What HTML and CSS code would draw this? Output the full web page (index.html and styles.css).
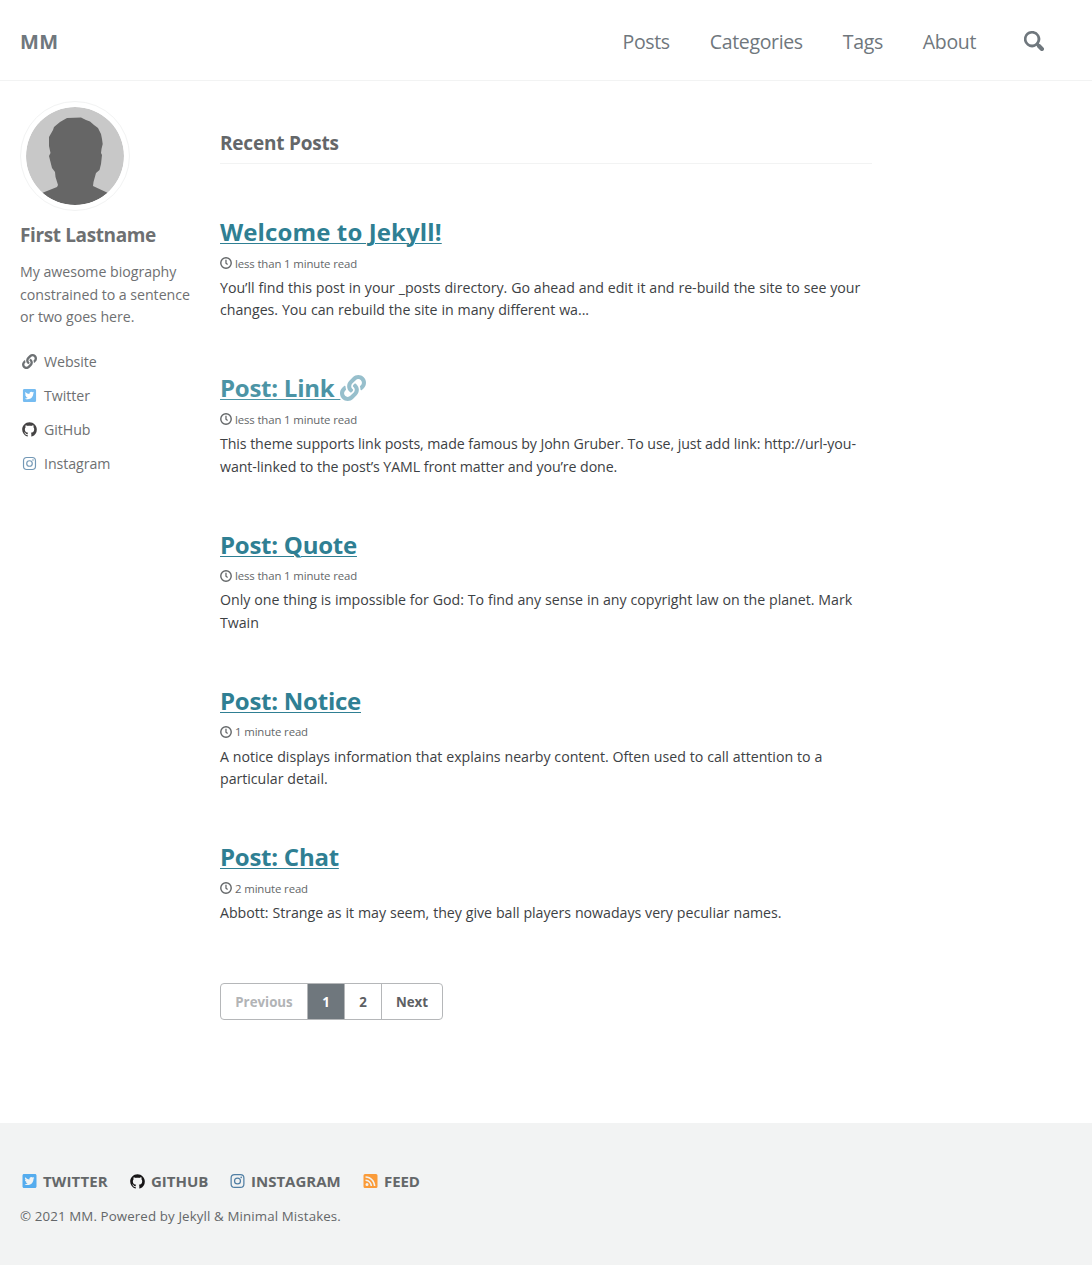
FILE: index.html
```html
<!DOCTYPE html>
<html lang="en">
<head>
<meta charset="utf-8">
<title>MM</title>
<link rel="stylesheet" href="styles.css">
</head>
<body>
<svg class="sprite" aria-hidden="true">
  <symbol id="link" viewBox="0 0 512 512"><path d="M326.612 185.391c59.747 59.809 58.927 155.698.36 214.59-.11.12-.24.25-.36.37l-67.2 67.2c-59.27 59.27-155.699 59.262-214.96 0-59.27-59.26-59.27-155.7 0-214.96l37.106-37.106c9.84-9.84 26.786-3.3 27.294 10.606.648 17.722 3.826 35.527 9.69 52.721 1.986 5.822.567 12.262-3.783 16.612l-13.087 13.087c-28.026 28.026-28.905 73.66-1.155 101.96 28.024 28.579 74.086 28.749 102.325.51l67.2-67.19c28.191-28.191 28.073-73.757 0-101.83-3.701-3.694-7.429-6.564-10.341-8.569a16.037 16.037 0 0 1-6.947-12.606c-.396-10.567 3.348-21.456 11.698-29.806l21.054-21.055c5.521-5.521 14.182-6.199 20.584-1.731a152.482 152.482 0 0 1 20.522 17.197zM467.547 44.449c-59.261-59.262-155.69-59.27-214.96 0l-67.2 67.2c-.12.12-.25.25-.36.37-58.566 58.892-59.387 154.781.36 214.59a152.454 152.454 0 0 0 20.521 17.196c6.402 4.468 15.064 3.789 20.584-1.731l21.054-21.055c8.35-8.35 12.094-19.239 11.698-29.806a16.037 16.037 0 0 0-6.947-12.606c-2.912-2.005-6.64-4.875-10.341-8.569-28.073-28.073-28.191-73.639 0-101.83l67.2-67.19c28.239-28.239 74.3-28.069 102.325.51 27.75 28.3 26.872 73.934-1.155 101.96l-13.087 13.087c-4.35 4.35-5.769 10.79-3.783 16.612 5.864 17.194 9.042 34.999 9.69 52.721.509 13.906 17.454 20.446 27.294 10.606l37.106-37.106c59.271-59.259 59.271-155.699.001-214.959z"/></symbol>
  <symbol id="twitter" viewBox="0 0 448 512"><path d="M400 32H48C21.5 32 0 53.5 0 80v352c0 26.5 21.5 48 48 48h352c26.5 0 48-21.5 48-48V80c0-26.5-21.5-48-48-48zm-48.9 158.8c.2 2.8.2 5.7.2 8.5 0 86.7-66 186.6-186.6 186.6-37.2 0-71.7-10.8-100.7-29.4 5.3.6 10.4.8 15.8.8 30.7 0 58.9-10.4 81.4-28-28.8-.6-53-19.5-61.3-45.5 10.1 1.5 19.2 1.5 29.6-1.2-30-6.1-52.5-32.5-52.5-64.4v-.8c8.7 4.9 18.9 7.9 29.6 8.3a65.447 65.447 0 0 1-29.2-54.6c0-12.2 3.2-23.4 8.9-33.1 32.3 39.8 80.8 65.8 135.2 68.6-9.3-44.5 24-80.6 64-80.6 18.9 0 35.9 7.9 47.9 20.7 14.8-2.8 29-8.3 41.6-15.8-4.9 15.2-15.2 28-28.8 36.1 13.2-1.4 26-5.1 37.8-10.2-8.9 13.1-20.1 24.7-32.9 34z"/></symbol>
  <symbol id="github" viewBox="-.2 -.3 16.4 16.4"><path d="M8 0C3.58 0 0 3.58 0 8c0 3.54 2.29 6.53 5.47 7.59.4.07.55-.17.55-.38 0-.19-.01-.82-.01-1.49-2.01.37-2.53-.49-2.69-.94-.09-.23-.48-.94-.82-1.13-.28-.15-.68-.52-.01-.53.63-.01 1.08.58 1.23.82.72 1.21 1.87.87 2.33.66.07-.52.28-.87.51-1.07-1.78-.2-3.64-.89-3.64-3.95 0-.87.31-1.59.82-2.15-.08-.2-.36-1.02.08-2.12 0 0 .67-.21 2.2.82.64-.18 1.32-.27 2-.27s1.36.09 2 .27c1.53-1.04 2.2-.82 2.2-.82.44 1.1.16 1.92.08 2.12.51.56.82 1.27.82 2.15 0 3.07-1.87 3.75-3.65 3.95.29.25.54.73.54 1.48 0 1.07-.01 1.93-.01 2.2 0 .21.15.46.55.38A8.01 8.01 0 0 0 16 8c0-4.42-3.58-8-8-8z"/></symbol>
  <symbol id="instagram" viewBox="0 0 448 512"><rect x="20" y="52" width="408" height="408" rx="110" fill="none" stroke="currentColor" stroke-width="40"/><circle cx="224" cy="256" r="95" fill="none" stroke="currentColor" stroke-width="40"/><circle cx="343" cy="137" r="27"/></symbol>
  <symbol id="rss" viewBox="0 0 448 512"><path fill-rule="evenodd" d="M48 32h352a48 48 0 0 1 48 48v352a48 48 0 0 1-48 48H48a48 48 0 0 1-48-48V80a48 48 0 0 1 48-48zm64 288a48 48 0 1 0 0 96 48 48 0 0 0 0-96zM64 213v34a9 9 0 0 0 8 9c85 5 147 70 152 152a9 9 0 0 0 9 8h34a8 8 0 0 0 8-9C270 301 179 210 73 205a8 8 0 0 0-9 8zm0-104v34a9 9 0 0 0 8 9c141 5 251 119 256 256a9 9 0 0 0 9 8h34a8 8 0 0 0 9-9C374 244 241 106 73 101a8 8 0 0 0-9 8z"/></symbol>
  <symbol id="clock" viewBox="0 0 512 512"><circle cx="256" cy="256" r="223" fill="none" stroke="currentColor" stroke-width="60"/><path d="M255 112v152l70 52" fill="none" stroke="currentColor" stroke-width="54"/></symbol>
</svg>

<header class="masthead">
  <a class="site-title" href="#">MM</a>
  <nav class="site-nav">
    <a href="#">Posts</a>
    <a href="#">Categories</a>
    <a href="#">Tags</a>
    <a href="#">About</a>
  </nav>
  <button class="search" aria-label="Toggle search"><svg viewBox="0 0 15.99 16"><path d="M15.5,13.12L13.19,10.8a1.69,1.69,0,0,0-1.28-.55l-.06-.06A6.5,6.5,0,0,0,5.77,0,6.5,6.5,0,0,0,2.46,11.59a6.47,6.47,0,0,0,7.74.26l.05.05a1.65,1.65,0,0,0,.5,1.24l2.38,2.38A1.68,1.68,0,0,0,15.5,13.12ZM6.4,2A4.41,4.41,0,1,1,2,6.4,4.43,4.43,0,0,1,6.4,2Z"/></svg></button>
</header>

<div class="page">
  <aside class="sidebar">
    <svg class="avatar" viewBox="0 0 98 98">
      <defs><clipPath id="round"><circle cx="49" cy="49" r="49"/></clipPath></defs>
      <g clip-path="url(#round)">
        <rect width="98" height="98" fill="#c8c8c8"/>
        <path fill="#666" d="M41 11L55 10.500L60 13L64 14.500L68 18L72 21L75 27L76 32L76.700 37L75.500 42L75 46L76 48L75 57L73.500 63L70 66L67.500 75L67 79L82 86L98 98H0L16 86L31 80L32 78L29.500 70L29 65L26 61L23 49L24.500 46L23 39L23 30L27 23L28 20L34 15Z"/>
      </g>
    </svg>
    <h3 class="author-name">First Lastname</h3>
    <p class="author-bio">My awesome biography constrained to a sentence or two goes here.</p>
    <ul class="author-links">
      <li><svg class="icon"><use href="#link"/></svg><a href="#">Website</a></li>
      <li><svg class="icon twitter"><use href="#twitter"/></svg><a href="#">Twitter</a></li>
      <li><svg class="icon github"><use href="#github"/></svg><a href="#">GitHub</a></li>
      <li><svg class="icon instagram"><use href="#instagram"/></svg><a href="#">Instagram</a></li>
    </ul>
  </aside>

  <main class="archive">
    <h3 class="subtitle">Recent Posts</h3>
    <article class="post">
      <h2 class="lead"><a href="#">Welcome to Jekyll!</a></h2>
      <p class="meta"><svg><use href="#clock"/></svg>less than 1 minute read</p>
      <p class="excerpt">You’ll find this post in your _posts directory. Go ahead and edit it and re-build the site to see your changes. You can rebuild the site in many different wa...</p>
    </article>
    <article class="post">
      <h2 class="external"><a href="#">Post: Link&nbsp;</a><svg><use href="#link"/></svg></h2>
      <p class="meta"><svg><use href="#clock"/></svg>less than 1 minute read</p>
      <p class="excerpt tight">This theme supports link posts, made famous by John Gruber. To use, just add link: http://url-you-<wbr>want-linked to the post’s YAML front matter and you’re done.</p>
    </article>
    <article class="post">
      <h2><a href="#">Post: Quote</a></h2>
      <p class="meta"><svg><use href="#clock"/></svg>less than 1 minute read</p>
      <p class="excerpt">Only one thing is impossible for God: To find any sense in any copyright law on the planet. Mark Twain</p>
    </article>
    <article class="post">
      <h2><a href="#">Post: Notice</a></h2>
      <p class="meta"><svg><use href="#clock"/></svg>1 minute read</p>
      <p class="excerpt">A notice displays information that explains nearby content. Often used to call attention to a particular detail.</p>
    </article>
    <article class="post">
      <h2><a href="#">Post: Chat</a></h2>
      <p class="meta"><svg><use href="#clock"/></svg>2 minute read</p>
      <p class="excerpt">Abbott: Strange as it may seem, they give ball players nowadays very peculiar names.</p>
    </article>
    <nav class="pagination">
      <a class="disabled" href="#">Previous</a>
      <a class="current" href="#">1</a>
      <a class="number" href="#">2</a>
      <a class="next" href="#">Next</a>
    </nav>
  </main>
</div>

<footer class="footer">
  <ul class="footer-links">
    <li class="f-twitter"><svg class="icon twitter"><use href="#twitter"/></svg><a href="#">Twitter</a></li>
    <li class="f-github"><svg class="icon github"><use href="#github"/></svg><a href="#">GitHub</a></li>
    <li class="f-instagram"><svg class="icon instagram"><use href="#instagram"/></svg><a href="#">Instagram</a></li>
    <li class="f-feed"><svg class="icon rss"><use href="#rss"/></svg><a href="#">Feed</a></li>
  </ul>
  <p class="copyright">© 2021 MM. Powered by Jekyll &amp; Minimal Mistakes.</p>
</footer>
</body>
</html>
```

FILE: styles.css
```css
* { box-sizing: border-box; }
body {
  margin: 0;
  min-height: 1265px;
  display: flex;
  flex-direction: column;
  background: #fff;
  color: #3d4144;
  font-family: "Segoe UI", "Open Sans", "Noto Sans", sans-serif;
}
h2, h3, p, ul { margin: 0; padding: 0; }
ul { list-style: none; }
a { color: inherit; text-decoration: none; }
svg { fill: currentColor; flex: none; }
.sprite { display: none; }

.masthead {
  height: 81px;
  padding: 2px 48px 0 20px;
  display: flex;
  align-items: center;
  border-bottom: 1px solid #f2f3f3;
  color: #6f777d;
}
.site-title { font-size: 20px; font-weight: 700; letter-spacing: 0.5px; margin-right: auto; }
.site-nav { display: flex; gap: 40px; font-size: 19.5px; letter-spacing: -0.35px; }
.search {
  margin: 0 0 1px 48px;
  padding: 0;
  border: 0;
  background: none;
  color: inherit;
  line-height: 0;
}
.search svg { width: 20px; height: 20px; }

.page { display: flex; padding: 20px 20px 0; }
.sidebar { width: 200px; padding-right: 25px; color: #6e7072; }
.avatar {
  display: block;
  width: 110px;
  height: 110px;
  padding: 5px;
  border: 1px solid #f2f3f3;
  border-radius: 50%;
}
.author-name { margin-top: 10px; font-size: 19px; line-height: 28px; letter-spacing: -0.38px; }
.author-bio { margin-top: 12px; font-size: 14.2px; line-height: 22.5px; letter-spacing: -0.04px; }
.author-links { margin-top: 16px; font-size: 14.2px; letter-spacing: -0.05px; }
.author-links li { display: flex; align-items: center; height: 34px; }
.icon { width: 15px; height: 15px; margin: 0 7px 0 2px; }
.author-links .icon { opacity: 0.8; }
.author-links .icon:not(.twitter):not(.github):not(.instagram) { color: #494e52; }
.twitter { color: #55acee; }
.github { color: #171516; }
.instagram { color: #517fa4; }
.rss { color: #fa9b39; }
.footer-links .icon.twitter, .footer-links .icon.instagram, .footer-links .icon.rss { height: 16px; }

.archive { width: 652px; padding-top: 28px; }
.subtitle {
  height: 35px;
  margin-bottom: 52px;
  border-bottom: 1px solid #f2f3f3;
  color: #646769;
  font-size: 19px;
  line-height: 28px;
  letter-spacing: -0.2px;
}
.post { margin-bottom: 50.5px; }
.post h2 {
  display: flex;
  align-items: center;
  height: 32px;
  font-size: 24px;
  line-height: 32px;
  letter-spacing: -0.25px;
  color: #2f7f93;
}
.post h2.lead { letter-spacing: 0.12px; }
.post h2 a { text-decoration: underline; text-decoration-thickness: 1px; text-underline-offset: 2px; }
.post h2.external { color: #4c94a5; }
.post h2.external svg { width: 26px; height: 26px; color: #97bfcc; }
.meta {
  display: flex;
  align-items: center;
  gap: 3px;
  height: 18px;
  margin-top: 6px;
  color: #646769;
  font-size: 11.4px;
  letter-spacing: -0.13px;
}
.meta svg { width: 12px; height: 12px; }
.excerpt { margin-top: 4.75px; font-size: 14.2px; line-height: 22.5px; letter-spacing: -0.03px; word-spacing: 0.25px; }
.excerpt.tight { letter-spacing: -0.08px; word-spacing: 0; }

.pagination {
  display: flex;
  width: 223px;
  height: 37px;
  margin-top: 59px;
  border: 1px solid #b5b7b9;
  border-radius: 4px;
  overflow: hidden;
  color: #5d6063;
  font-size: 13.3px;
  font-weight: 700;
  line-height: 36px;
  text-align: center;
}
.pagination a { border-right: 1px solid #b5b7b9; }
.pagination .disabled { width: 87px; color: #b2b4b6; }
.pagination .current { width: 37px; background: #6f777d; color: #fff; }
.pagination .number { width: 37px; }
.pagination .next { width: 60px; border-right: 0; }

.footer {
  margin-top: auto;
  height: 142px;
  padding: 46px 20px 0;
  background: #f2f3f3;
  color: #646769;
}
.footer-links { display: flex; font-size: 15px; font-weight: 700; text-transform: uppercase; }
.footer-links li { display: flex; align-items: center; height: 24px; }
.footer-links .icon { margin-right: 6px; }
.f-twitter { width: 108px; letter-spacing: 0.15px; }
.f-github { width: 100px; }
.f-instagram { width: 133px; }
.f-feed { letter-spacing: -0.1px; }
.copyright { margin-top: 12px; font-size: 13.3px; line-height: 22px; letter-spacing: 0.12px; }
```
